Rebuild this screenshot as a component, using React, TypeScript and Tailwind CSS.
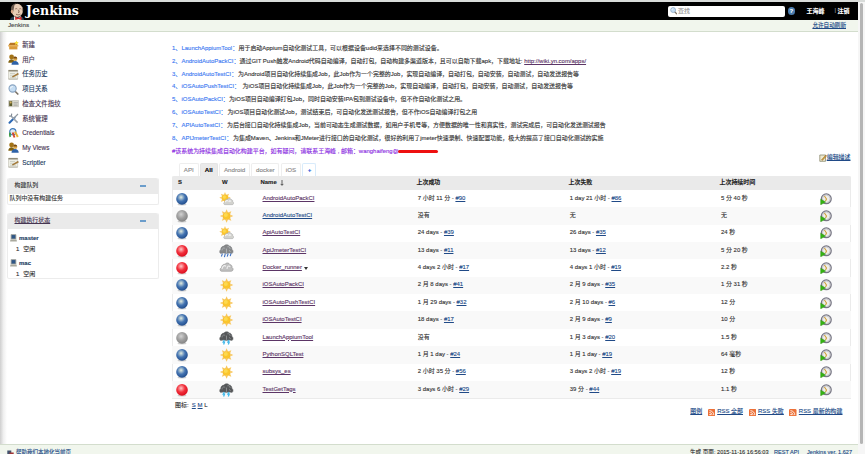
import React from "react";

type Ball = "blue" | "grey" | "red";
type Weather = "partly" | "sun" | "rain" | "cloud" | "storm";
type Run = { text: string; build?: string };
type Job = { ball: Ball; weather: Weather; name: string; fresh?: boolean; menu?: boolean; ok: Run; fail: Run; time: string };

const jobs: Job[] = [
  { ball: "blue", weather: "partly", name: "AndroidAutoPackCI", ok: { text: "7 小时 11 分", build: "#90" }, fail: { text: "1 day 21 小时", build: "#86" }, time: "5 分 40 秒" },
  { ball: "grey", weather: "sun", name: "AndroidAutoTestCI", fresh: true, ok: { text: "没有" }, fail: { text: "无" }, time: "无" },
  { ball: "blue", weather: "partly", name: "ApiAutoTestCI", ok: { text: "24 days", build: "#39" }, fail: { text: "26 days", build: "#35" }, time: "24 秒" },
  { ball: "red", weather: "rain", name: "ApiJmeterTestCI", ok: { text: "13 days", build: "#11" }, fail: { text: "13 days", build: "#12" }, time: "5 分 20 秒" },
  { ball: "red", weather: "cloud", name: "Docker_runner", menu: true, ok: { text: "4 days 2 小时", build: "#17" }, fail: { text: "4 days 1 小时", build: "#19" }, time: "2.2 秒" },
  { ball: "blue", weather: "sun", name: "iOSAutoPackCI", ok: { text: "2 月 8 days", build: "#41" }, fail: { text: "2 月 9 days", build: "#35" }, time: "1 分 31 秒" },
  { ball: "blue", weather: "sun", name: "iOSAutoPushTestCI", ok: { text: "1 月 29 days", build: "#32" }, fail: { text: "2 月 10 days", build: "#6" }, time: "12 分" },
  { ball: "blue", weather: "sun", name: "iOSAutoTestCI", ok: { text: "18 days", build: "#17" }, fail: { text: "2 月 9 days", build: "#9" }, time: "10 分" },
  { ball: "grey", weather: "storm", name: "LaunchAppiumTool", ok: { text: "没有" }, fail: { text: "1 月 3 days", build: "#20" }, time: "1.5 秒" },
  { ball: "blue", weather: "sun", name: "PythonSQLTest", ok: { text: "1 月 1 day", build: "#24" }, fail: { text: "1 月 1 day", build: "#19" }, time: "64 毫秒" },
  { ball: "blue", weather: "sun", name: "subsys_es", ok: { text: "2 小时 35 分", build: "#56" }, fail: { text: "3 days 2 小时", build: "#19" }, time: "12 秒" },
  { ball: "red", weather: "storm", name: "TestGetTags", ok: { text: "3 days 6 小时", build: "#29" }, fail: { text: "39 分", build: "#44" }, time: "1.1 秒" },
];

const notes: { n: string; name: string; text: string; link?: string; gap: string }[] = [
  { n: "1、", name: "LaunchAppiumTool：", gap: "w-[57.5px]", text: "用于启动Appium自动化测试工具，可以根据设备udid来选择不同的测试设备。" },
  { n: "2、", name: "AndroidAutoPackCI：", gap: "w-[58.5px]", text: "通过GIT Push触发Android代码自动编译，自动打包，自动构建多渠道版本，且可以自助下载apk，下载地址: ", link: "http://wiki.yn.com/apps/" },
  { n: "3、", name: "AndroidAutoTestCI：", gap: "w-[57px]", text: "为Android项目自动化持续集成Job，此Job作为一个完整的Job，实现自动编译，自动打包，自动安装，自动测试，自动发送报告等" },
  { n: "4、", name: "iOSAutoPushTestCI：", gap: "w-[61.5px]", text: "为iOS项目自动化持续集成Job，此Job作为一个完整的Job，实现自动编译，自动打包，自动安装，自动测试，自动发送报告等" },
  { n: "5、", name: "iOSAutoPackCI：", gap: "w-[48px]", text: "为iOS项目自动编译打包Job，同时自动安装IPA包到测试设备中，但不作自动化测试之用。" },
  { n: "6、", name: "iOSAutoTestCI：", gap: "w-[46.5px]", text: "为iOS项目自动化测试Job，测试结束后，可自动化发送测试报告，但不作iOS自动编译打包之用" },
  { n: "7、", name: "APIAutoTestCI：", gap: "w-[46px]", text: "为后台接口自动化持续集成Job，当前可动态生成测试数据，如用户手机号等，方便数据的唯一性和真实性，测试完成后，可自动化发送测试报告" },
  { n: "8、", name: "APIJmeterTestCI：", gap: "w-[52px]", text: "为集成Maven、Jenkins和JMeter进行接口的自动化测试，很好的利用了jmeter快速录制、快速配置功能，极大的提高了接口自动化测试的实施" },
];

function BallIcon({ kind }: { kind: Ball }) {
  const edge = { blue: "#24508f", grey: "#868686", red: "#dc1020" }[kind];
  const mid = { blue: "#4474b2", grey: "#a0a0a0", red: "#f2303c" }[kind];
  const hi = { blue: "#e2ecdf", grey: "#d2d2d2", red: "#ffc8c8" }[kind];
  return (
    <svg className="h-[14px] w-[14px]" viewBox="0 0 14 14">
      <defs>
        <radialGradient id={"ball-" + kind} cx=".42" cy=".36" r=".62">
          <stop offset="0" stopColor={hi} />
          <stop offset=".55" stopColor={mid} />
          <stop offset="1" stopColor={edge} />
        </radialGradient>
      </defs>
      <ellipse cx="7" cy="12.5" rx="4.4" ry=".9" fill="#000" opacity=".18" />
      <circle cx="7" cy="6.9" r="5.8" fill={`url(#ball-${kind})`} />
    </svg>
  );
}

function Sun({ x, y, s = 1 }: { x: number; y: number; s?: number }) {
  return (
    <g transform={`translate(${x} ${y}) scale(${s})`}>
      {[0, 45, 90, 135, 180, 225, 270, 315].map((a) => (
        <path key={a} d="M-1.2-4 0-6.7 1.2-4Z" fill="#f8c860" transform={`rotate(${a})`} />
      ))}
      <circle r="3.8" fill="#fbc62c" stroke="#f3b02c" strokeWidth=".5" />
      <circle cx="-.8" cy="-.9" r="2" fill="#fdd94f" />
    </g>
  );
}

function WeatherIcon({ kind }: { kind: Weather }) {
  const cloud = "M2.2 9.2C.5 9 .4 6.4 2.2 5.8 2.2 3.6 4 2.2 5.6 2.5 6.5.8 9.5.9 10.3 2.9c1.5.1 2.2 1.5 1.9 2.7 1.7.9 1.2 3.4-.6 3.6Z";
  const dark = "M1.6 9C.2 8.3.5 5.9 1.7 5.3 1.8 3 3.4 1.6 4.9 1.7 6-.1 9.2-.1 10.2 1.5c1.6 0 2.9 1.8 2.7 3.4 1.4.9 1.6 3.3.2 4.1L10 8.5 7.4 9.2 4.8 8.5Z";
  return (
    <svg className="h-[14px] w-[15px]" viewBox="0 0 15 14">
      {kind === "sun" && <Sun x={7.6} y={7} />}
      {kind === "partly" && (
        <>
          <Sun x={6} y={5.8} s={0.85} />
          <path d={cloud} transform="translate(4 5.3) scale(.8)" fill="#d2d2ce" stroke="#a5a5a5" strokeWidth=".6" />
          <path d="M6.5 9.8c.4-1 1.4-1.4 2-1M10 9.6c.4-.9 1.2-.9 1.7-.4" stroke="#f4f4f4" strokeWidth="1.1" strokeLinecap="round" fill="none" />
        </>
      )}
      {kind === "cloud" && (
        <>
          <path d={cloud} transform="translate(.2 .6) scale(1.05)" fill="#c0c0c0" stroke="#949494" strokeWidth=".6" />
          <path d="M3 8c.5-3.2 2.5-4 4-2.7M8 8c0-3.2 2-3.6 3.2-2" stroke="#f0f0f0" strokeWidth="1.1" fill="none" />
        </>
      )}
      {(kind === "rain" || kind === "storm") && (
        <>
          <path d={dark} transform="translate(0 .4)" fill={kind === "rain" ? "#858789" : "#555759"} stroke={kind === "rain" ? "#77797b" : "#66686a"} strokeWidth=".5" />
          <path d="M3 6.4c.4-2.6 2-2.9 3.2-1.8M8.4 2.8c1.5-.6 2.8.7 2.7 2.1M7.5 4.6v4.2M10 6.4l1.6 1.2" stroke={kind === "rain" ? "#b9bcbf" : "#96989a"} strokeWidth=".8" fill="none" />
        </>
      )}
      {kind === "rain" && <path d="m3.4 9.6-1 2.9M6.3 9.6l-.9 3.6M9.2 9.5l-1 3.2M12 9.4l-.8 2.8" stroke="#3f72c4" strokeWidth="1.1" />}
      {kind === "storm" && <path d="M5.3 9 4.2 11.1h1.3L4.6 13.5M10 9 8.9 11.1h1.3L9.3 13.5" stroke="#42b9ea" strokeWidth="1.3" fill="none" />}
    </svg>
  );
}

function BuildIcon() {
  return (
    <svg className="h-[12px] w-[12px]" viewBox="0 0 12 12">
      <circle cx="6.3" cy="5.8" r="4.9" fill="#eeeeea" stroke="#777684" strokeWidth="1.3" />
      <circle cx="6.3" cy="5.8" r="3.8" fill="none" stroke="#b8b8c2" strokeWidth=".7" />
      <path d="m4.4 3 2.1 3-1 2" stroke="#cf9f35" strokeWidth="1.1" fill="none" />
      <path d="M.7 6.2 5.6 9 .7 11.8Z" fill="#35b312" stroke="#2d9511" strokeWidth=".5" />
    </svg>
  );
}

function Lens({ className }: { className: string }) {
  return (
    <svg className={className} viewBox="0 0 11 11">
      <path d="m6.8 7 3 3" stroke="#7d7468" strokeWidth="1.7" strokeLinecap="round" />
      <circle cx="4.6" cy="4.5" r="3.6" fill="#c4dcf2" stroke="#8aa5c2" strokeWidth="1.1" />
      <path d="M2.6 4.4c.2-1.3 1-1.9 2.1-1.8" stroke="#fff" strokeWidth="1" fill="none" />
    </svg>
  );
}

function People() {
  return (
    <g>
      <circle cx="3.6" cy="2.9" r="2.4" fill="#a37316" />
      <path d="M.3 8.8c0-4.6 6.2-4.8 6.4 0Z" fill="#80600f" />
      <circle cx="7.2" cy="4.9" r="2.1" fill="#dba84c" />
      <path d="M5.2 4.5c.3-2.7 3.9-2.5 4 .1Z" fill="#7a4b12" />
      <path d="M3.5 10.7c0-5 7.2-5 7.2 0Z" fill="#2e62a8" />
    </g>
  );
}

function Notepad() {
  return (
    <g>
      <path d="M.5 1.2h9.2v8.8H.5Z" fill="#eeeee5" stroke="#b7b5a8" strokeWidth=".5" />
      <path d="M.5 1h9.2v1.5H.5Z" fill="#918b78" />
      <path d="M2 4.5h5M2 6.3h3.6M2 8.2h6" stroke="#b9beae" strokeWidth=".6" />
      <path d="m4.2 7.6 5.7-3.3.7.9-5.8 3Z" fill="#b98535" stroke="#76501b" strokeWidth=".4" />
      <path d="M.5 10.2h9.2" stroke="#a7a595" strokeWidth=".7" />
    </g>
  );
}

function MenuIcon({ kind }: { kind: string }) {
  if (kind === "lens") return <Lens className="h-[11px] w-[11px]" />;
  return (
    <svg className="h-[11px] w-[11px]" viewBox="0 0 11 11">
      {kind === "box" && (
        <>
          <path d="M1.2 5h8.2v4.4H1.2Z" fill="#d99a3b" />
          <path d="m.6 5 1.5-2.3h5.6L9.7 5Z" fill="#b87625" />
          <path d="M.2 5h10.1v1.5H.2Z" fill="#e5b05c" />
          <path d="m8.5.5.7 1.4 1.6.2-1.2 1.1.3 1.7-1.4-.8-1.4.8.3-1.7-1.1-1.1 1.5-.2Z" fill="#f9e13d" />
        </>
      )}
      {kind === "people" && <People />}
      {kind === "note" && <Notepad />}
      {kind === "print" && (
        <>
          <path d="M.6 2.5h10v6.2H.6Z" fill="#dddcd1" stroke="#b2b1a8" strokeWidth=".5" />
          <path d="M1.2 3.2h3v4.9h-3Z" fill="#5c5c2c" />
          <circle cx="2.7" cy="4.5" r="1" fill="#d3ae62" />
          <path d="M5.5 4.4H10M5.5 6h4M5.5 7.4h4.2" stroke="#999" strokeWidth=".6" />
        </>
      )}
      {kind === "tools" && (
        <>
          <path d="m1.5 9.8 5-5" stroke="#2d69b5" strokeWidth="2" strokeLinecap="round" />
          <path d="M6 5 10 1" stroke="#8f979d" strokeWidth="1.1" />
          <path d="m2.8 2.8 6.8 6.8" stroke="#9da5ad" strokeWidth="1.6" />
          <path d="M3.7.7 3.4 3 1 3.2" stroke="#858e97" strokeWidth="1.2" fill="none" />
        </>
      )}
      {kind === "keys" && (
        <>
          <circle cx="4.8" cy="3.7" r="3.1" fill="#dfe8f2" stroke="#3d79bb" strokeWidth="1.1" />
          <path d="M2 4.6c-.3 1.7-.2 3 .3 4.2" stroke="#35963f" strokeWidth="1.7" fill="none" />
          <path d="m4.7 4.5 1.8 5" stroke="#d7472c" strokeWidth="1.9" />
          <path d="M7 3.6 9.8 9" stroke="#e9b336" strokeWidth="2" />
        </>
      )}
    </svg>
  );
}

const menu = [
  { icon: "box", label: "新建", color: "text-[#463552]" },
  { icon: "people", label: "用户", color: "text-[#463552]" },
  { icon: "note", label: "任务历史", color: "text-[#203a60]" },
  { icon: "lens", label: "项目关系", color: "text-[#203a60]" },
  { icon: "print", label: "检查文件指纹", color: "text-[#463552]" },
  { icon: "tools", label: "系统管理", color: "text-[#463552]" },
  { icon: "keys", label: "Credentials", color: "text-[#463552]" },
  { icon: "people", label: "My Views", color: "text-[#463552]" },
  { icon: "note", label: "Scriptler", color: "text-[#203a60]" },
];

function Computer() {
  return (
    <svg className="h-[8px] w-[7px]" viewBox="0 0 7 8">
      <path d="M1.1.6h4.8v4.4H1.1Z" fill="#2f5686" stroke="#a6a69c" strokeWidth=".8" />
      <path d="M.4 5.6h6.2l.3 1.8H.1Z" fill="#aaa99d" />
    </svg>
  );
}

function Node({ name, className }: { name: string; className: string }) {
  return (
    <div className={className}>
      <div className="flex h-[10px] items-center pl-[2px] font-bold text-[#203a60]">
        <Computer />
        <span className="ml-[2px] text-[6px]">{name}</span>
      </div>
      <div className="flex h-[12.5px] items-center pl-[8px]">
        <span className="w-[7.3px]">1</span>空闲
      </div>
    </div>
  );
}

function PaneHead({ title, link }: { title: string; link?: boolean }) {
  return (
    <div className="flex h-[15.5px] items-center justify-between rounded-t-[2px] bg-[#eaeaea] pl-[6.5px] pr-[12px]">
      <span className={link ? "text-[#463552] underline" : "text-[#333]"}>{title}</span>
      <span className="h-[2px] w-[6px] bg-[#6b9dcb]" />
    </div>
  );
}

function RunCell({ run }: { run: Run }) {
  return (
    <span className="pl-[1.3px]">
      {run.text}
      {run.build && (
        <>
          {" - "}
          <a className="text-[#204a87] underline">{run.build}</a>
        </>
      )}
    </span>
  );
}

function Rss() {
  return (
    <svg className="h-[7.5px] w-[7.5px]" viewBox="0 0 16 16">
      <rect width="16" height="16" rx="2.5" fill="#ed7138" />
      <circle cx="4.5" cy="11.7" r="1.6" fill="#fff" />
      <path d="M3 7.5c3.2 0 5.5 2.4 5.5 5.5M3 3.6c5.4 0 9.4 4 9.4 9.4" stroke="#fff" strokeWidth="1.8" fill="none" />
    </svg>
  );
}

function Butler() {
  return (
    <svg className="h-[17px] w-[16px] shrink-0" viewBox="0 0 16 17">
      <path d="M1 17c.4-2.4 2-3.2 4-3.4h6c2.4.2 3.6 1.2 4 3.4Z" fill="#283d50" />
      <path d="m5 13 3 3 3.8-3V17H5Z" fill="#f3eee6" />
      <ellipse cx="8.2" cy="7.3" rx="5.8" ry="6.6" fill="#e8cdb6" />
      <path d="M2 6.4C1.7 3 4 .6 7.6.6 5.4 1.7 5.1 3 5 4.8L4 9.6 2.2 8.2Z" fill="#6a5a4e" />
      <path d="M13 3.4c1.5 1.6 1.3 3.9.8 5.6l-1-2Z" fill="#8a7768" />
      <ellipse cx="3" cy="8.6" rx="1.2" ry="1.8" fill="#d9a98a" />
      <path d="M6.2 6.1c.6-.6 1.5-.6 2.1-.1M10.3 6c.6-.5 1.3-.4 1.8 0M7 11.2c1.5.9 3.1.8 4.4 0M9.5 6.8l.7 2.4-1.2.3" stroke="#725344" strokeWidth=".8" fill="none" />
      <path d="m6.2 13.5 3 1.4 3.2-1.4.3 3.4-3.4-1-3.1 1Z" fill="#d8302f" />
    </svg>
  );
}

const tabs = [
  { label: "API", w: "w-[19.5px]" },
  { label: "All", w: "w-[18px]", active: true },
  { label: "Android", w: "w-[31px]" },
  { label: "docker", w: "w-[28px]" },
  { label: "iOS", w: "w-[20.5px]" },
];

const cols = "grid grid-cols-[46px_42.5px_156px_152px_151px_98.5px_1fr] items-center";

export default function App() {
  return (
    <div className="flex h-[454px] w-[865px] overflow-hidden whitespace-nowrap bg-white font-['Liberation_Sans','Noto_Sans_CJK_SC',sans-serif] text-[5.96px] leading-none text-[#333] [-webkit-text-stroke:0.12px]">
      <div className="flex h-full w-[857.5px] flex-col">
        <div className="h-[2px] shrink-0 bg-[#d9dcda]" />
        <header className="flex h-[18px] shrink-0 items-center bg-black pl-[8.5px] text-white">
          <Butler />
          <span className="ml-[1.5px] w-[642px] pb-px font-['DejaVu_Serif',serif] text-[12.6px] font-bold leading-[16px] [-webkit-text-stroke:0px]">Jenkins</span>
          <div className="flex h-[11px] w-[117px] items-center rounded-[2px] bg-white pl-[1.5px] text-[#999]">
            <Lens className="mr-[1px] h-[7.5px] w-[7.5px]" />
            <span className="pt-px">查找</span>
          </div>
          <span className="ml-[2.5px] flex h-[7.5px] w-[7.5px] items-center justify-center rounded-full bg-[#4b7cae] text-[6px] font-bold">?</span>
          <span className="ml-[11.5px] w-[28px] pt-px font-bold">王海峰</span>
          <span className="w-[3px] text-[#999]">|</span>
          <span className="pt-px font-bold">注销</span>
        </header>
        <nav className="flex h-[12px] shrink-0 items-center border-b border-[#d3ddcd] bg-[#f1f6ed] pl-[8px] pr-[11.5px] text-[#444]">
          <span className="w-[30px] text-[6.2px]">Jenkins</span>
          <span>›</span>
          <a className="ml-auto text-[5.6px] text-[#204a87] underline">允许自动刷新</a>
        </nav>

        <div className="flex min-h-0 flex-1">
          <div className="w-[7px] shrink-0 bg-gradient-to-r from-[#cfcfcf] via-[#f0f0f0] to-white" />
          <aside className="w-[151.5px] shrink-0 pt-[5.7px]">
            {menu.map((m) => (
              <div key={m.label} className={"flex h-[14.7px] items-center pl-[1.2px] text-[6.4px] " + m.color}>
                <MenuIcon kind={m.icon} />
                <span className="ml-[3px] pt-[0.5px]">{m.label}</span>
              </div>
            ))}
            <section className="mt-[8.5px] rounded-[2px] border border-[#ececec] border-t-0">
              <PaneHead title="构建队列" />
              <div className="flex h-[10px] items-center pl-[1.5px] pt-[0.5px]">队列中没有构建任务</div>
            </section>
            <section className="mt-[8.5px] h-[66px] rounded-[2px] border border-[#ececec] border-t-0">
              <PaneHead title="构建执行状态" link />
              <Node name="master" className="mt-[4.5px]" />
              <Node name="mac" className="mt-[2.5px]" />
            </section>
          </aside>

          <main className="ml-[13.5px] w-[678.5px] pt-[10.5px]">
            {notes.map((t) => (
              <p key={t.n} className="flex h-[12.85px] items-center">
                <span className="w-[9.5px] text-[#3a78f2]">{t.n}</span>
                <span className={"-mr-[0.5px] shrink-0 text-[#3a78f2] " + t.gap}>{t.name}</span>
                <span className="whitespace-pre">{t.text}</span>
                {t.link && <a className="text-[#5c3566] underline">{t.link}</a>}
              </p>
            ))}
            <p className="flex h-[12.85px] items-center text-[#8a2be2]">
              #该系统为持续集成自动化构建平台，如有疑问，请联系王海峰 , 邮箱：wanghaifeng@
              <span className="-ml-[0.5px] h-[3px] w-[39.5px] rounded-full bg-[#ee1010]" />
            </p>
            <div className="-mt-[4px] flex h-[8px] items-center justify-end">
              <svg className="h-[8px] w-[8px]" viewBox="0 0 8 8">
                <path d="M.8 1h5.7v6.3H.8Z" fill="#eee9cf" stroke="#8c8a70" strokeWidth=".8" />
                <path d="M2.5 5.8 6.8 1l.9.8-4.3 4.6Z" fill="#dda12f" stroke="#745629" strokeWidth=".4" />
              </svg>
              <a className="text-[#204a87] underline">编辑描述</a>
            </div>

            <div className="mt-[0.7px] flex h-[13.5px] gap-[1.3px] pl-[7px] text-[6.2px] text-[#888]">
              {tabs.map((t) => (
                <span key={t.label} className={"flex items-center justify-center rounded-t-[2px] border border-b-0 pt-[0.5px] " + t.w + (t.active ? " border-[#e4e4e4] bg-[#eaeaea] font-bold text-black" : " border-[#eee]")}>
                  {t.label}
                </span>
              ))}
              <span className="flex w-[14px] items-center justify-center rounded-t-[2px] border border-b-0 border-[#d8ebfb] font-bold text-[#2456d8]">+</span>
            </div>

            <div className="rounded-t-[2px] border border-[#ebebeb] border-t-0">
              <div className={"-mx-px h-[13.7px] rounded-t-[2px] bg-[#eaeaea] pt-[0.5px] font-bold text-[#222] " + cols}>
                <span className="pl-[6px]">S</span>
                <span className="pl-[4px]">W</span>
                <span className="flex items-center">
                  Name
                  <svg className="ml-[3px] h-[6px] w-[4px]" viewBox="0 0 4 6">
                    <path d="M2 0v5M.7 3.9 2 5.4l1.3-1.5" stroke="#222" strokeWidth=".7" fill="none" />
                  </svg>
                </span>
                <span>上次成功</span>
                <span>上次失败</span>
                <span>上次持续时间</span>
              </div>
              {jobs.map((j) => (
                <div key={j.name} className={"-mx-px h-[17.37px] odd:bg-[#f9f9f9] " + cols}>
                  <span className="pl-[3px]"><BallIcon kind={j.ball} /></span>
                  <span className="pl-[0.5px]"><WeatherIcon kind={j.weather} /></span>
                  <span className="flex items-center pl-[2px]">
                    <a className={"underline " + (j.fresh ? "text-[#204a87]" : "text-[#5c3566]")}>{j.name}</a>
                    {j.menu && <span className="ml-[2.5px] border-x-[2px] border-t-[3px] border-x-transparent border-t-[#333]" />}
                  </span>
                  <RunCell run={j.ok} />
                  <RunCell run={j.fail} />
                  <span className="pl-[1.5px]">{j.time}</span>
                  <span className="pl-[2px]"><BuildIcon /></span>
                </div>
              ))}
            </div>
            <div className="mt-[3px] flex h-[8px] items-center gap-[1.8px] pl-[3px]">
              <span className="w-[15px]">图标:</span>
              <a className="text-[#204a87] underline">S</a>
              <a className="text-[#204a87] underline">M</a>
              <span>L</span>
            </div>
            <div className="-mt-[2px] flex h-[8px] items-center justify-end pr-[8px] text-[#204a87]">
              <a className="mr-[5.5px] underline">图例</a>
              <Rss />
              <a className="ml-[2px] mr-[5.5px] underline">RSS 全部</a>
              <Rss />
              <a className="ml-[2px] mr-[5.5px] underline">RSS 失败</a>
              <Rss />
              <a className="ml-[2px] underline">RSS 最新的构建</a>
            </div>
          </main>
        </div>

        <footer className="flex h-[10px] shrink-0 items-start overflow-hidden border-t border-[#d3ddcd] bg-[#f1f6ed] pl-[7px] pr-[6.5px] pt-[4.5px]">
          <svg className="h-[7px] w-[7px]" viewBox="0 0 7 7">
            <path d="M.3.5h4v4h-4Z" fill="#43536d" />
            <path d="M2.5 2.5h4.2v4.2H2.5Z" fill="#a03535" />
          </svg>
          <a className="ml-[2px] text-[5.5px] text-[#204a87] underline">帮助我们本地化当前页</a>
          <span className="ml-auto w-[84px] text-[5.6px]">生成 页面: 2015-11-16 16:56:03</span>
          <a className="w-[33px] text-[5.6px] text-[#204a87] underline">REST API</a>
          <a className="w-[44px] text-[5.6px] text-[#204a87] underline">Jenkins ver. 1.627</a>
        </footer>
      </div>
      <div className="flex h-full flex-1 justify-center border-t-[2px] border-[#d9dcda] bg-[#f6f6f6] pt-px">
        <div className="h-[441px] w-[3.5px] rounded-full bg-[#b5b5b5]" />
      </div>
    </div>
  );
}
